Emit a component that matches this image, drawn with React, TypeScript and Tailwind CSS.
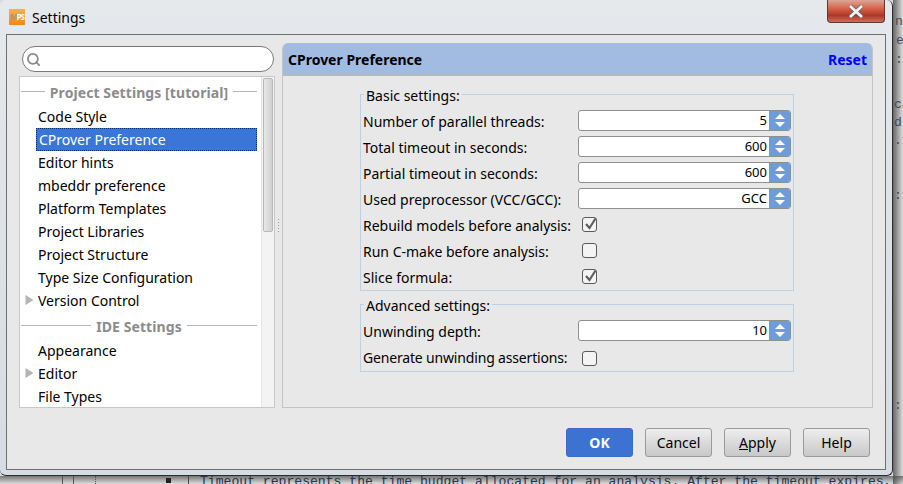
import { Search } from "lucide-react";

const sans = "font-['Noto_Sans',sans-serif]";

function Row({ label, sel, arrow }: { label: string; sel?: boolean; arrow?: boolean }) {
  return (
    <div className="relative h-[23px] pl-[17px] pr-[4px] text-[14px] leading-[23px] text-black">
      {arrow && (
        <svg className="absolute left-[4px] top-[6px]" width="9" height="10" viewBox="0 0 9 10">
          <path d="M0.5 0 L8.5 5 L0.5 10 Z" fill="#b4b4b4" />
        </svg>
      )}
      <div className={sel ? "h-[23px] -ml-[2px] pl-[2px] border border-dotted border-[#0f2a5c] bg-[#3a75d8] leading-[21px] text-white" : ""}>
        {label}
      </div>
    </div>
  );
}

function Section({ label, h }: { label: string; h: string }) {
  return (
    <div className={`flex items-center gap-[5px] pr-[4px] ${h}`}>
      <div className="h-px flex-1 bg-[#b5b5b5]" />
      <div className="pt-[3px] text-[14px] font-bold leading-none tracking-[0.08px] text-[#8c8c8c]">{label}</div>
      <div className="h-px flex-1 bg-[#b5b5b5]" />
    </div>
  );
}

function Spinner({ value }: { value: string }) {
  return (
    <div className="-mt-[3px] flex h-[21px] w-[213px] overflow-hidden rounded-[3px] border border-[#8f8f8f] bg-white">
      <div className="flex-1 pr-[2px] text-right text-[13px] leading-[19px] text-black">{value}</div>
      <div className="flex w-[21px] flex-col items-center justify-center gap-[3px] bg-[#6f9bd8]">
        <svg width="10" height="5" viewBox="0 0 10 5"><path d="M5 0 L10 5 L0 5 Z" fill="#fff" /></svg>
        <svg width="10" height="5" viewBox="0 0 10 5"><path d="M5 5 L10 0 L0 0 Z" fill="#fff" /></svg>
      </div>
    </div>
  );
}

function Check({ on, up }: { on?: boolean; up?: boolean }) {
  return (
    <div className={`relative ml-[4px] h-[15px] w-[15px] rounded-[3px] border border-[#5a5a5a] bg-[#f4f4f4] ${up ? "mb-[3px]" : ""}`}>
      {on && (
        <svg className="absolute -left-[1px] -top-[2px]" width="17" height="17" viewBox="0 0 17 17">
          <path d="M4 8 L7.5 12 L13.5 2.5" fill="none" stroke="#5f5f5f" strokeWidth="2.2" />
        </svg>
      )}
    </div>
  );
}

function FormRow({ label, children, tight }: { label: string; children: React.ReactNode; tight?: boolean }) {
  return (
    <div className="flex h-[26px] items-center pl-[2px]">
      <div className={`w-[215px] whitespace-nowrap text-[14px] leading-none text-black ${tight ? "tracking-[-0.17px]" : ""}`}>{label}</div>
      {children}
    </div>
  );
}

function Group({ title, className, children }: { title: string; className: string; children: React.ReactNode }) {
  return (
    <div className={`w-[434px] border border-[#bcd0e6] ${className}`}>
      <div className="-mt-[9px] ml-[3px] mb-[3px] h-[20px] w-fit bg-[#e8e8e8] px-[2px] text-[14px] leading-[20px] text-black">{title}</div>
      {children}
    </div>
  );
}

function Btn({ children, primary }: { children: React.ReactNode; primary?: boolean }) {
  return (
    <div
      className={
        primary
          ? "flex h-[29px] w-[67px] items-center justify-center rounded-[3px] border border-[#3a6cc0] bg-[#3c73d2] text-[14px] font-bold text-white"
          : "flex h-[29px] w-[67px] items-center justify-center rounded-[3px] border border-[#9a9a9a] bg-gradient-to-b from-[#eeeeee] to-[#c8c8c8] text-[14px] text-black"
      }
    >
      {children}
    </div>
  );
}

const bgBits: [string, number, number][] = [
  ["n", 895, 14],
  ["e", 896, 33],
  [":", 895, 52],
  ["ca", 894, 97],
  ["d", 894, 115],
  [".1", 894, 133],
  [":1", 894, 188],
  [":", 894, 398],
];

export default function App() {
  return (
    <div className={`relative h-[484px] w-[903px] overflow-hidden bg-[#dcdcdc] ${sans}`}>
      {bgBits.map(([t, x, y]) => (
        <div key={`${t}${y}`} className="absolute font-['Liberation_Mono',monospace] text-[13px] leading-[16px] text-[#3c4a5c]" style={{ left: x, top: y }}>
          {t}
        </div>
      ))}
      <div className="absolute left-[893px] top-0 h-[484px] w-[10px] bg-gradient-to-r from-[#4a4a4a]/80 to-transparent" />
      <div className="absolute left-0 top-[476px] h-[8px] w-[903px] bg-gradient-to-b from-[#4a4a4a]/70 to-transparent" />
      <div className="absolute left-[62px] top-[476px] h-[8px] w-px bg-[#555]" />
      <div className="absolute left-[73px] top-[476px] h-[8px] w-px bg-[#555]" />
      <div className="absolute left-[95px] top-[476px] h-[8px] w-px border-l border-dotted border-[#555]" />
      <div className="absolute left-[188px] top-[476px] h-[8px] w-px bg-[#444]" />
      <div className="absolute left-[166px] top-[478px] h-[5px] w-[5px] bg-[#222]" />
      <div className="absolute left-[200px] top-[474px] whitespace-nowrap font-['Liberation_Mono',monospace] text-[13.1px] leading-[16px] text-[#26344c]">
        Timeout represents the time budget allocated for an analysis. After the timeout expires,
      </div>

      <div className="relative flex h-[476px] w-[893px] flex-col rounded-[6px] border-r border-b border-[#2c2c2c] bg-gradient-to-b from-[#e6e9ec] via-[#dde2e7] to-[#d5dce3] pl-[6px] pr-[6px] pb-[5px]">
        <div className="flex h-[34px] shrink-0 items-center pl-[3px]">
          <div className="flex h-[16px] w-[16px] items-center justify-center overflow-hidden bg-[linear-gradient(#f7b04a,#ea8a1e)] text-[8px] font-bold leading-none tracking-[-0.9px]">
            <span className="text-[#a8957a]">M</span>
            <span className="text-white">PS</span>
          </div>
          <div className="ml-[7px] pt-[2px] text-[14px] leading-none text-black">Settings</div>
          <div className="ml-auto mb-[11px] mr-[1px] flex h-[23px] w-[58px] items-center justify-center rounded-b-[4px] border border-t-0 border-[#5a3a34] bg-[linear-gradient(#dba698_0%,#d5583c_45%,#a8392a_70%,#cf6e58_100%)]">
            <svg width="16" height="13" viewBox="0 0 16 13">
              <path d="M2 1 L14 12 M14 1 L2 12" stroke="#59606a" strokeWidth="4.4" />
              <path d="M2 1 L14 12 M14 1 L2 12" stroke="#f2f2f2" strokeWidth="2.8" />
            </svg>
          </div>
        </div>

        <div className="flex min-h-0 flex-1 flex-col border border-[#6f6f6f] bg-[#e8e8e8]">
          <div className="flex h-[373px] shrink-0 pl-[12px] pr-[12px] pt-[8px]">
            <div className="flex w-[256px] shrink-0 flex-col pt-[3px]">
              <div className="ml-[3px] flex h-[26px] w-[252px] items-center rounded-full border border-[#7a7a7a] bg-white pl-[3px]">
                <Search size={15} strokeWidth={2.8} color="#8a8a8a" />
              </div>
              <div className="mt-[4px] flex h-[332px] border border-[#c8c8c8] bg-white">
                <div className="min-w-0 flex-1 overflow-hidden pl-[1px]">
                  <Section label="Project Settings [tutorial]" h="h-[28px]" />
                  <Row label="Code Style" />
                  <Row label="CProver Preference" sel />
                  <Row label="Editor hints" />
                  <Row label="mbeddr preference" />
                  <Row label="Platform Templates" />
                  <Row label="Project Libraries" />
                  <Row label="Project Structure" />
                  <Row label="Type Size Configuration" />
                  <Row label="Version Control" arrow />
                  <Section label="IDE Settings" h="h-[27px]" />
                  <Row label="Appearance" />
                  <Row label="Editor" arrow />
                  <Row label="File Types" />
                </div>
                <div className="w-[13px] shrink-0 border-l border-[#e4e4e4] bg-[#f3f3f3] pl-px pt-[1px]">
                  <div className="h-[154px] w-[10px] rounded-[2px] border border-[#b8b8b8] bg-gradient-to-r from-[#e8e8e8] to-[#d0d0d0]" />
                </div>
              </div>
            </div>
            <div className="flex w-[7px] shrink-0 items-start justify-center pt-[175px]">
              <div className="h-[14px] w-[3px] bg-[radial-gradient(#9a9a9a_40%,transparent_45%)] bg-[length:3px_3px]" />
            </div>
            <div className="flex w-[591px] shrink-0 flex-col overflow-hidden rounded-t-[6px] border border-t-0 border-[#c4c4c4] bg-[#e8e8e8]">
              <div className="flex h-[33px] shrink-0 items-center justify-between border-b-2 border-[#b8b8b8] bg-[#a2bbe0] pl-[5px] pr-[5px] pt-[1px] text-[14px] font-bold">
                <div className="text-black">CProver Preference</div>
                <div className="text-[#0000ff]">Reset</div>
              </div>
              <div className="flex flex-1 flex-col items-center pr-[1px] pt-[18px]">
                <Group title="Basic settings:" className="h-[197px]">
                  <FormRow label="Number of parallel threads:"><Spinner value="5" /></FormRow>
                  <FormRow label="Total timeout in seconds:"><Spinner value="600" /></FormRow>
                  <FormRow label="Partial timeout in seconds:"><Spinner value="600" /></FormRow>
                  <FormRow label="Used preprocessor (VCC/GCC):"><Spinner value="GCC" /></FormRow>
                  <FormRow label="Rebuild models before analysis:"><Check on up /></FormRow>
                  <FormRow label="Run C-make before analysis:"><Check up /></FormRow>
                  <FormRow label="Slice formula:"><Check on up /></FormRow>
                </Group>
                <Group title="Advanced settings:" className="mt-[13px] h-[68px]">
                  <FormRow label="Unwinding depth:"><Spinner value="10" /></FormRow>
                  <FormRow label="Generate unwinding assertions:" tight><Check /></FormRow>
                </Group>
              </div>
            </div>
          </div>
          <div className="flex flex-1 items-start justify-end gap-[12px] pr-[15px] pt-[20px]">
            <Btn primary>OK</Btn>
            <Btn>Cancel</Btn>
            <Btn><span><span className="underline">A</span>pply</span></Btn>
            <Btn>Help</Btn>
          </div>
        </div>
      </div>
    </div>
  );
}
